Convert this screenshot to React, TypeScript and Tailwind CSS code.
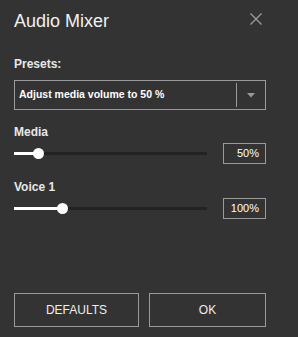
const channels = [
  { name: "Media", value: 50 },
  { name: "Voice 1", value: 100 },
];

const TRACK_W = 193;

const Slider = ({ value }: { value: number }) => {
  const pos = Math.round((value / 400) * TRACK_W);
  return (
    <div className="relative w-[193px] h-[11px]">
      <div className="absolute left-0 right-0 top-[4px] h-[3px] bg-[#232323]" />
      <div className="absolute left-0 top-[4px] h-[3px] bg-white" style={{ width: pos }} />
      <div
        className="absolute top-0 w-[11px] h-[11px] rounded-full bg-white"
        style={{ left: pos - 5 }}
      />
    </div>
  );
};

const App = () => {
  return (
    <div
      className="w-[298px] h-[337px] bg-[#333333] text-[#e8e8e8] overflow-hidden"
      style={{ fontFamily: '"Liberation Sans", Arial, sans-serif' }}
    >
      <div className="w-[252px] ml-[14px] flex flex-col">
        {/* header */}
        <div className="pt-[12px] flex justify-between items-start">
          <p className="text-[18px] leading-[18px] text-[#f0f0f0]">Audio Mixer</p>
          <svg width="12" height="12" viewBox="0 0 12 12" className="mt-[1px] mr-[4px]">
            <path d="M0.5 0.5 L11.5 11.5 M11.5 0.5 L0.5 11.5" stroke="#9a9a9a" strokeWidth="1.4" />
          </svg>
        </div>

        {/* presets */}
        <p className="mt-[28px] text-[12px] leading-[12px] font-bold">Presets:</p>
        <div className="mt-[10px] h-[30px] border border-[#9a9a9a] flex items-center">
          <p className="flex-1 pl-[4px] text-[10.5px] font-bold text-white">Adjust media volume to 50 %</p>
          <div className="w-px h-[24px] bg-[#9a9a9a]" />
          <div className="w-[28px] flex justify-center">
            <svg width="8" height="5" viewBox="0 0 8 5">
              <path d="M0 0 H8 L4 4.5 Z" fill="#9a9a9a" />
            </svg>
          </div>
        </div>

        {/* channels */}
        <div className="mt-[16px] flex flex-col gap-[17px]">
          {channels.map((c) => (
            <div key={c.name} className="flex flex-col">
              <p className="text-[12px] leading-[12px] font-bold">{c.name}</p>
              <div className="mt-[5px] h-[21px] flex items-center">
                <Slider value={c.value} />
                <div className="ml-auto w-[43px] h-[21px] border border-[#9a9a9a] flex items-center justify-end pr-[6px] text-[11px] text-white">
                  {c.value}%
                </div>
              </div>
            </div>
          ))}
        </div>

        {/* buttons */}
        <div className="mt-[74px] flex gap-[10px]">
          <button className="w-[125px] h-[34px] border border-[#9a9a9a] bg-[#333333] text-[12px] text-[#eeeeee]">
            DEFAULTS
          </button>
          <button className="w-[117px] h-[34px] border border-[#9a9a9a] bg-[#333333] text-[12px] text-[#eeeeee]">
            OK
          </button>
        </div>
      </div>
    </div>
  );
};

export default App;
